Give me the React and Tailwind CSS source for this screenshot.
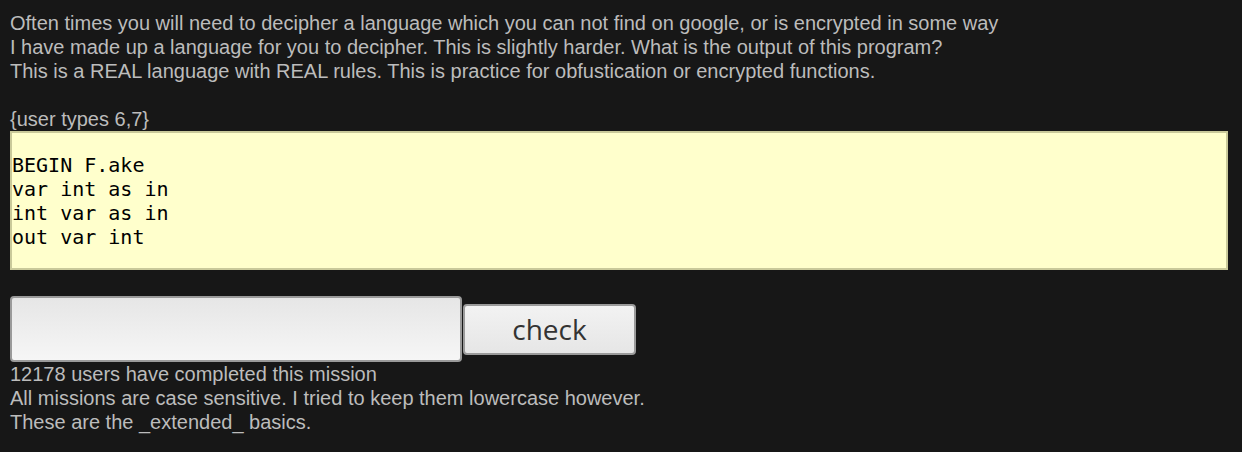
export default function App() {
  const code = ['BEGIN F.ake', 'var int as in', 'int var as in', 'out var int']

  return (
    <div className="min-h-[452px] w-full bg-[#171717] px-[10px] pt-[11px] font-['Liberation_Sans',Arial,sans-serif] text-[20px] leading-[24px] text-[#bcbcbc]">
      <p>
        Often times you will need to decipher a language which you can not find on google, or is encrypted in some way
      </p>
      <p>I have made up a language for you to decipher. This is slightly harder. What is the output of this program?</p>
      <p>This is a REAL language with REAL rules. This is practice for obfustication or encrypted functions.</p>
      <p>&nbsp;</p>
      <p>{'{user types 6,7}'}</p>

      <pre className="mr-[4px] border-2 border-[#c9c99a] bg-[#ffffcc] pt-[20px] pb-[19px] font-['DejaVu_Sans_Mono',monospace] text-[20px] leading-[24px] text-black">
        {code.join('\n')}
      </pre>

      <div className="mt-[26px] flex items-center gap-[1px]">
        <input
          type="text"
          className="h-[66px] w-[452px] rounded-[4px] border-2 border-[#9a9a9a] bg-gradient-to-b from-[#e6e6e6] to-[#f6f6f6] outline-none"
        />
        <button className="h-[51px] w-[173px] rounded-[4px] border-2 border-[#9a9a9a] bg-gradient-to-b from-[#f2f2f2] to-[#e6e6e6] font-['Open_Sans',sans-serif] text-[28px] leading-none text-[#333]">
          check
        </button>
      </div>

      <p>12178 users have completed this mission</p>
      <p>All missions are case sensitive. I tried to keep them lowercase however.</p>
      <p>These are the _extended_ basics.</p>
    </div>
  )
}
